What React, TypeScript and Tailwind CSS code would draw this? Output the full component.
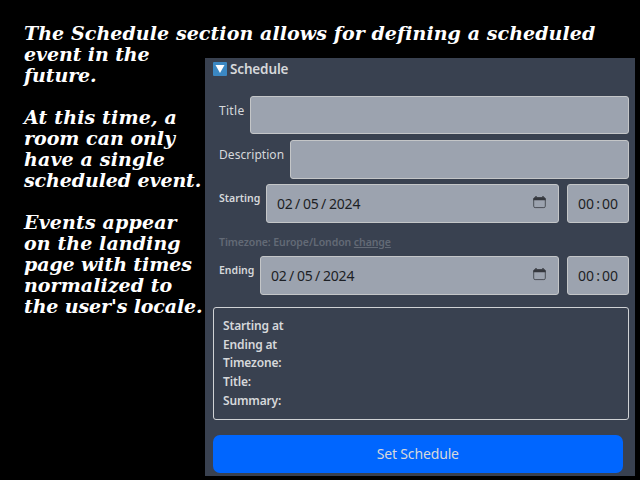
import React from "react";

const heading = [
  { text: "The Schedule section allows for defining a scheduled", cls: "tracking-[0.08px]" },
  { text: "event in the", cls: "tracking-[-0.1px]" },
  { text: "future.", cls: "tracking-[-0.1px]" },
  { text: "", cls: "" },
  { text: "At this time, a", cls: "tracking-[0.15px]" },
  { text: "room can only", cls: "tracking-[0px]" },
  { text: "have a single", cls: "tracking-[0.15px]" },
  { text: "scheduled event.", cls: "tracking-[-0.1px]" },
  { text: "", cls: "" },
  { text: "Events appear", cls: "tracking-[0.15px]" },
  { text: "on the landing", cls: "tracking-[0.1px]" },
  { text: "page with times", cls: "tracking-[-0.1px]" },
  { text: "normalized to", cls: "tracking-[0.05px]" },
  { text: "the user's locale.", cls: "tracking-[-0.12px]" },
];

const field = "rounded-[3px] border border-[#c4c6c8] bg-[#9ca3af]";

function CalendarIcon() {
  return (
    <svg className="block h-[13px] w-[13px]" viewBox="0 0 13 13" fill="none">
      <path d="M3 0v2M10 0v2" stroke="#34373d" strokeWidth="1.3" />
      <rect x="0.7" y="1.6" width="11.6" height="10" rx="1.4" stroke="#4b4f57" strokeWidth="1" />
      <path d="M0.4 3q0-1.6 1.6-1.6h9q1.6 0 1.6 1.6v1.2H0.4z" fill="#34373d" />
    </svg>
  );
}

function DateParts() {
  return (
    <span className="flex text-[14px] leading-none tracking-[-0.2px] text-[#1c1f25]">
      <span className="w-[15px]">02</span>
      <span className="w-[11px] text-center">/</span>
      <span className="w-[15px]">05</span>
      <span className="w-[11px] text-center">/</span>
      <span>2024</span>
    </span>
  );
}

function DateRow({ label }: { label: string }) {
  return (
    <div className="flex h-[39px]">
      <span className={`${label === "Starting" ? "w-[47px]" : "w-[41px]"} shrink-0 pt-[7px] text-[10.5px] leading-[14px] font-semibold whitespace-nowrap`}>
        {label}
      </span>
      <div className={`${field} flex flex-1 items-center justify-between pr-[12px] pl-[10px]`}>
        <DateParts />
        <span className="mb-[2px]">
          <CalendarIcon />
        </span>
      </div>
      <div className={`${field} ml-[8px] flex w-[62px] items-center pl-[10px] text-[14px] leading-none tracking-[-0.1px] text-[#1c1f25]`}>
        <span className="w-[16px]">00</span>
        <span className="w-[8px] text-center">:</span>
        <span>00</span>
      </div>
    </div>
  );
}

export default function App() {
  return (
    <div className="grid h-[480px] w-[640px] grid-cols-1 grid-rows-1 overflow-hidden bg-black">
      <div className="col-start-1 row-start-1 pt-[23px] pl-[24px] font-['DejaVu_Serif',serif] text-[19px] leading-[21px] font-bold whitespace-nowrap text-white italic">
        {heading.map((line, i) => (
          <div key={i} className="h-[21px]">
            <span className={line.cls}>{line.text}</span>
          </div>
        ))}
      </div>

      <section className="col-start-1 row-start-1 mt-[58px] ml-[205px] h-[418px] w-[430px] bg-[#394150] pr-[6px] pl-[7px] font-['Noto_Sans',sans-serif] text-[#d6d8db]">
        <header className="flex h-[38px] items-start pt-[4px]">
          <span className="ml-[0.5px] flex h-[14px] w-[14.5px] items-center justify-center rounded-[1px] bg-[#3b88c3]">
            <svg className="block h-[8px] w-[10px]" viewBox="0 0 10 8">
              <path d="M0.5 0h9L5 8z" fill="#fff" />
            </svg>
          </span>
          <span className="ml-[3px] text-[13.5px] leading-[14px] font-semibold tracking-[-0.15px]">Schedule</span>
        </header>

        <div className="pl-[7px]">
          <div className="flex h-[38px]">
            <span className="w-[31px] shrink-0 pt-[7px] text-[12px] leading-[16px] tracking-[0.3px]">Title</span>
            <div className={`${field} flex-1`} />
          </div>
          <div className="mt-[6px] flex h-[39px]">
            <span className="w-[71px] shrink-0 pt-[7px] text-[12px] leading-[16px] tracking-[0.05px]">Description</span>
            <div className={`${field} flex-1`} />
          </div>
          <div className="mt-[5px]">
            <DateRow label="Starting" />
          </div>
          <div className="mt-[12px] h-[14px] text-[10.5px] leading-[14px] font-semibold tracking-[-0.08px] whitespace-nowrap text-[#636a76]">
            Timezone: Europe/London <span className="underline">change</span>
          </div>
          <div className="mt-[7px]">
            <DateRow label="Ending" />
          </div>
        </div>

        <div className="mt-[12px] ml-[0.5px] h-[113px] rounded-[3px] border border-[#d0d2d5] pt-[9px] pl-[9.5px] text-[12px] leading-[18.7px] font-semibold tracking-[-0.15px]">
          <div>Starting at</div>
          <div>Ending at</div>
          <div>Timezone:</div>
          <div>Title:</div>
          <div>Summary:</div>
        </div>

        <button className="mt-[15px] ml-[0.5px] block h-[38px] w-[410.5px] rounded-[7px] bg-[#0066ff] text-center text-[14px] leading-[36px] tracking-[-0.15px]">
          Set Schedule
        </button>
      </section>
    </div>
  );
}
